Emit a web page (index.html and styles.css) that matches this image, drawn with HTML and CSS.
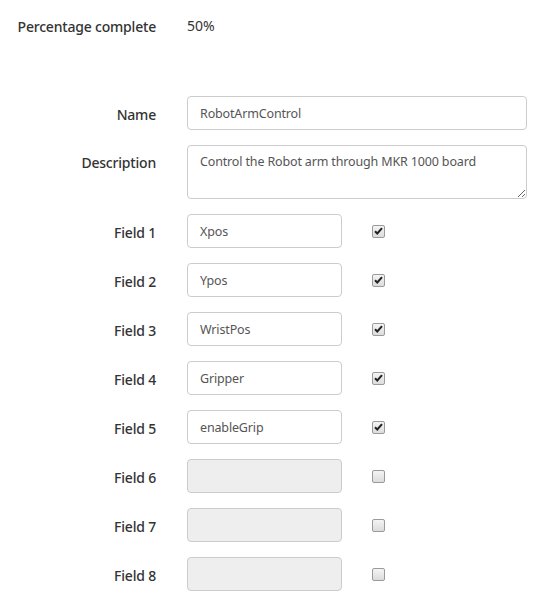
FILE: index.html
```html
<!DOCTYPE html>
<html>
<head>
<meta charset="utf-8">
<link rel="stylesheet" href="styles.css">
</head>
<body>
<div class="page">
  <div class="row top">
    <div class="label">Percentage complete</div>
    <div class="value">50%</div>
  </div>
  <div class="form">
    <div class="row">
      <label class="label">Name</label>
      <input class="input wide" type="text" value="RobotArmControl">
    </div>
    <div class="row desc-row">
      <label class="label">Description</label>
      <textarea class="input wide area">Control the Robot arm through MKR 1000 board</textarea>
    </div>
    <div class="row"><label class="label">Field 1</label><input class="input field" type="text" value="Xpos"><span class="cb checked"><svg width="9" height="8" viewBox="0 0 9 8"><path d="M1 4.2 L3.3 6.5 L8 1.2" fill="none" stroke="#222" stroke-width="2"/></svg></span></div>
    <div class="row"><label class="label">Field 2</label><input class="input field" type="text" value="Ypos"><span class="cb checked"><svg width="9" height="8" viewBox="0 0 9 8"><path d="M1 4.2 L3.3 6.5 L8 1.2" fill="none" stroke="#222" stroke-width="2"/></svg></span></div>
    <div class="row"><label class="label">Field 3</label><input class="input field" type="text" value="WristPos"><span class="cb checked"><svg width="9" height="8" viewBox="0 0 9 8"><path d="M1 4.2 L3.3 6.5 L8 1.2" fill="none" stroke="#222" stroke-width="2"/></svg></span></div>
    <div class="row"><label class="label">Field 4</label><input class="input field" type="text" value="Gripper"><span class="cb checked"><svg width="9" height="8" viewBox="0 0 9 8"><path d="M1 4.2 L3.3 6.5 L8 1.2" fill="none" stroke="#222" stroke-width="2"/></svg></span></div>
    <div class="row"><label class="label">Field 5</label><input class="input field" type="text" value="enableGrip"><span class="cb checked"><svg width="9" height="8" viewBox="0 0 9 8"><path d="M1 4.2 L3.3 6.5 L8 1.2" fill="none" stroke="#222" stroke-width="2"/></svg></span></div>
    <div class="row"><label class="label">Field 6</label><input class="input field" type="text" disabled><span class="cb"></span></div>
    <div class="row"><label class="label">Field 7</label><input class="input field" type="text" disabled><span class="cb"></span></div>
    <div class="row"><label class="label">Field 8</label><input class="input field" type="text" disabled><span class="cb"></span></div>
  </div>
</div>
</body>
</html>
```
FILE: styles.css
```css
html, body {
  margin: 0;
  padding: 0;
  background: #fff;
}
body {
  font-family: "Noto Sans", "Open Sans", sans-serif;
  color: #333;
}
.page {
  width: 540px;
}
.row {
  display: flex;
  align-items: center;
  margin-bottom: 15px;
}
.top {
  padding-top: 14px;
  height: 22px;
  margin-bottom: 60px;
}
.label {
  width: 156px;
  flex: none;
  text-align: right;
  font-size: 14px;
  font-weight: 500;
  letter-spacing: -0.2px;
  color: #333;
  margin-right: 31px;
  padding-top: 2px;
}
.desc-row {
  align-items: flex-start;
}
.desc-row .label {
  padding-top: 8px;
}
.value {
  font-size: 14px;
  color: #333;
}
.input {
  box-sizing: border-box;
  height: 34px;
  border: 1px solid #ccc;
  border-radius: 4px;
  padding: 6px 12px;
  font-family: "Noto Sans", "Open Sans", sans-serif;
  font-size: 12.5px;
  letter-spacing: -0.15px;
  color: #555;
  background: #fff;
  margin: 0;
  outline: none;
}
.input:disabled {
  background: #eee;
}
.wide {
  width: 340px;
}
.area {
  height: 54px;
  resize: vertical;
  padding-top: 7px;
  line-height: 18px;
}
.field {
  width: 155px;
}
.cb {
  box-sizing: border-box;
  width: 13px;
  height: 13px;
  margin-left: 30px;
  border: 1px solid #9a9a9a;
  border-radius: 2px;
  background: linear-gradient(#f4f4f4, #dcdcdc);
  display: flex;
  align-items: center;
  justify-content: center;
}
.cb svg {
  display: block;
}
```
